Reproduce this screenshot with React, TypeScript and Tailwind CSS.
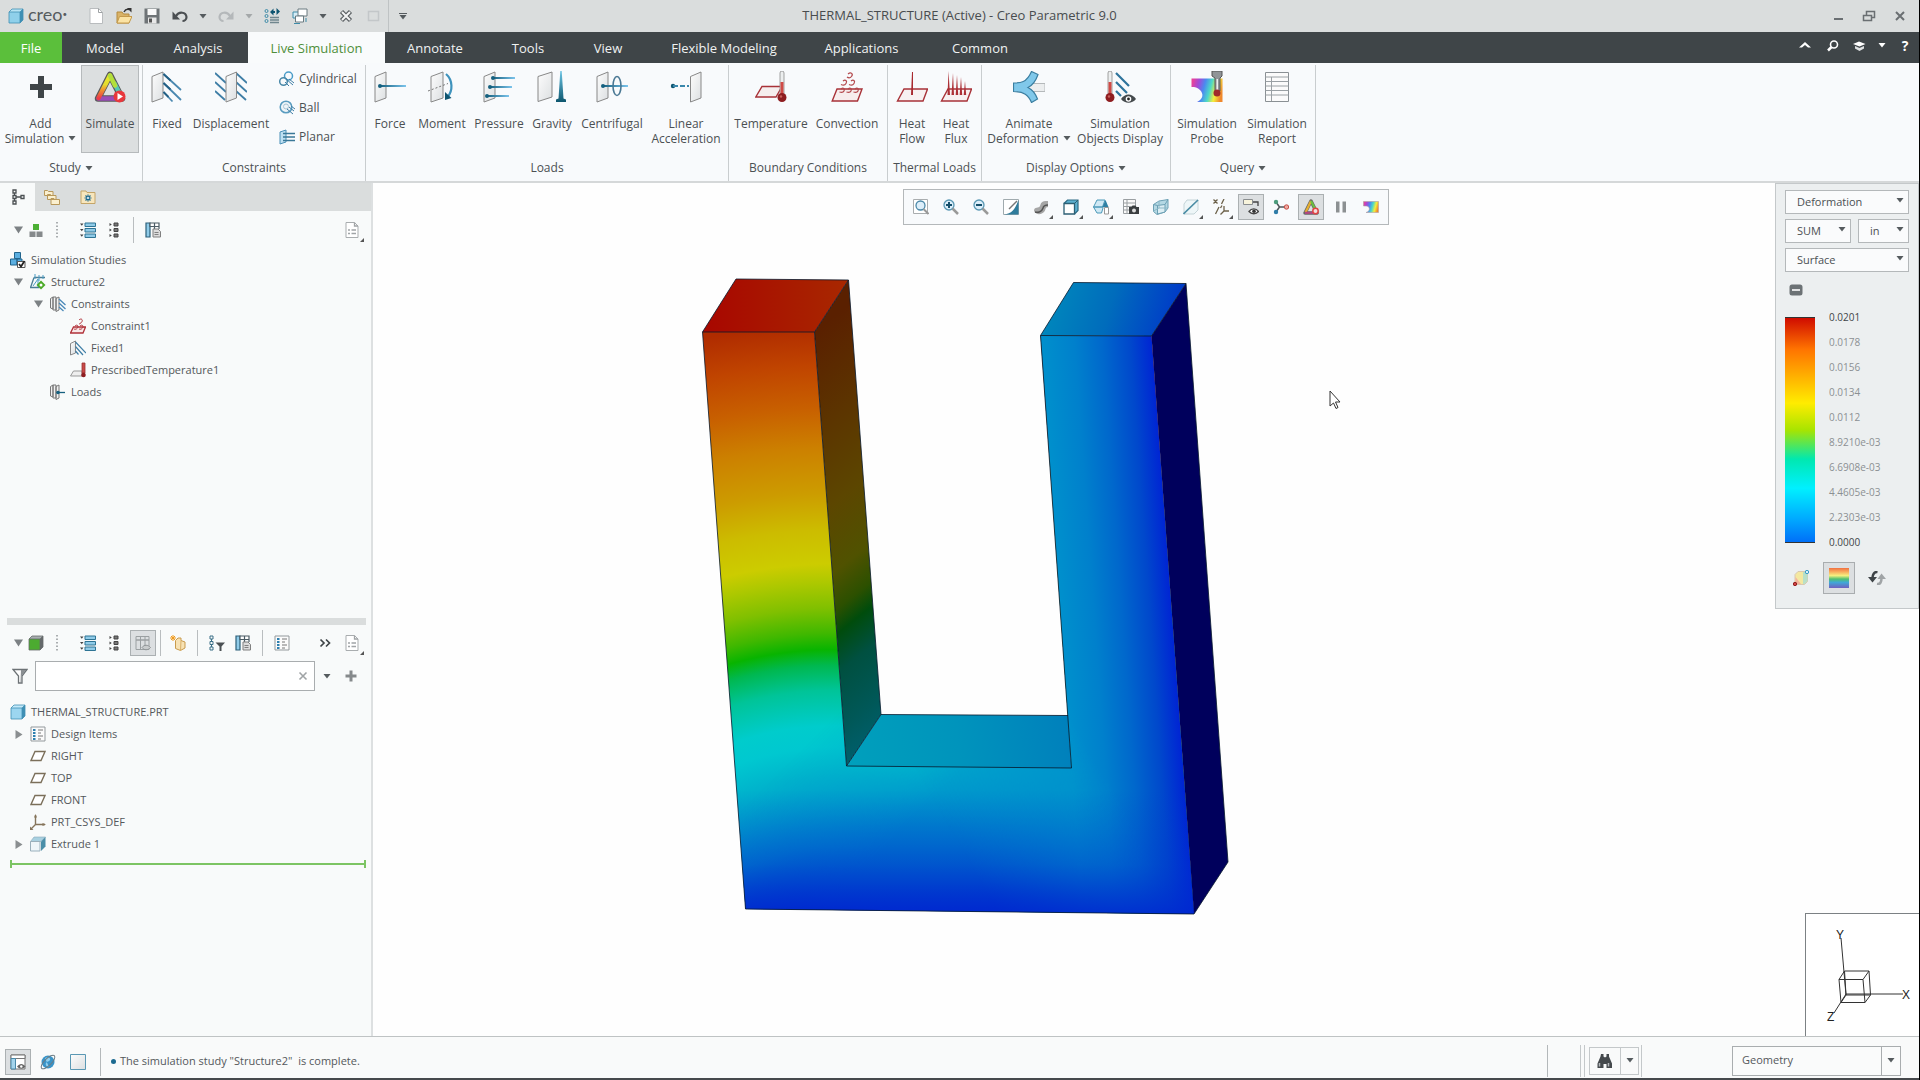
import { useState } from "react";
import type { ReactNode } from "react";

type GlyphProps = {
  children: ReactNode;
  size?: 16 | 32;
};

/* every icon is drawn on a 16 or 32 unit grid, one unit per pixel */
function Glyph({ children, size = 16 }: GlyphProps) {
  return (
    <svg
      viewBox={`0 0 ${size} ${size}`}
      className={size === 32 ? "h-8 w-8 shrink-0" : "h-4 w-4 shrink-0"}
      fill="none"
      aria-hidden="true"
    >
      {children}
    </svg>
  );
}

function Caret({ light = false }: { light?: boolean }) {
  return (
    <svg viewBox="0 0 8 5" className="h-[5px] w-2 shrink-0" aria-hidden="true">
      <path d="M0.5 0h7L4 4.5z" fill={light ? "#ffffff" : "#555b5e"} />
    </svg>
  );
}

function Corner() {
  return (
    <svg viewBox="0 0 4 4" className="absolute right-0 bottom-0 h-1 w-1" aria-hidden="true">
      <path d="M4 0v4H0z" fill="#555" />
    </svg>
  );
}

/* shared gradients, referenced by id from all the icons */
function Gradients() {
  return (
    <svg className="absolute h-0 w-0" aria-hidden="true">
      <defs>
        <linearGradient id="bluefade">
          <stop offset="0" stopColor="#15607f" />
          <stop offset="1" stopColor="#7cc4ec" />
        </linearGradient>
        <linearGradient id="blueV" x1="0" y1="0" x2="0" y2="1">
          <stop offset="0" stopColor="#6cc4e4" />
          <stop offset="1" stopColor="#0d566e" />
        </linearGradient>
        <linearGradient id="plate" x1="0" y1="0" x2="1" y2="1">
          <stop offset="0" stopColor="#fdfdfd" />
          <stop offset="1" stopColor="#dcdfe1" />
        </linearGradient>
        <linearGradient id="rainbow" x1="0" y1="0.3" x2="1" y2="0.5">
          <stop offset="0" stopColor="#e8409a" />
          <stop offset="0.2" stopColor="#a04ad8" />
          <stop offset="0.4" stopColor="#4a8af0" />
          <stop offset="0.6" stopColor="#4cd8c8" />
          <stop offset="0.8" stopColor="#f4ee3c" />
          <stop offset="1" stopColor="#f0882c" />
        </linearGradient>
        <linearGradient id="spectrum" x1="0" y1="0" x2="0" y2="1">
          <stop offset="0" stopColor="#e8e82c" />
          <stop offset="0.4" stopColor="#e4dc30" />
          <stop offset="0.65" stopColor="#f09030" />
          <stop offset="1" stopColor="#ec3c48" />
        </linearGradient>
      </defs>
    </svg>
  );
}

const PLATE = "M1 5.5 12 1v26L1 31z";

function BallBar({ x, y, len }: { x: number; y: number; len: number }) {
  return (
    <>
      <rect x={x} y={y - 1} width={len} height="2" fill="url(#bluefade)" />
      <circle cx={x} cy={y} r="2" fill="#15607f" />
    </>
  );
}

const plus = (
  <Glyph size={32}>
    <path d="M13 5h6v8h8v6h-8v8h-6v-8H5v-6h8z" fill="#3f4548" />
  </Glyph>
);

const simulate = (
  <Glyph size={32}>
    <path d="M16 4 28 27.5H4z" stroke="#5a5a5a" strokeWidth="6.5" strokeLinejoin="round" />
    <path d="M4.5 27.500h23" stroke="#9a4cb8" strokeWidth="4.500" strokeLinecap="round" />
    <path d="M16 4.500 4.500 27" stroke="url(#spectrum)" strokeWidth="4.500" strokeLinecap="round" />
    <path d="M20.500 12.500 27.500 26" stroke="#56c8b4" strokeWidth="4.500" strokeLinecap="round" />
    <path d="M16 4.500l5 10" stroke="#b4e03a" strokeWidth="4.500" strokeLinecap="round" />
    <circle cx="25.500" cy="25.500" r="6" fill="#e8383c" />
    <path d="M23.500 22v7l5.500-3.500z" fill="#fff" />
  </Glyph>
);

const fixed = (
  <Glyph size={32}>
    <path d={PLATE} fill="url(#plate)" stroke="#888" />
    <path d="M12.500 3 30 19M12.500 12 30 29M12.500 21l9 9.500" stroke="#4a88b0" strokeWidth="1.800" />
    <path d="M12.500 3l7 6.500M12.500 12l7 6.500M12.500 21l5 5" stroke="#235f84" strokeWidth="1.800" />
  </Glyph>
);

const displacement = (
  <Glyph size={32}>
    <path d="M0 2l11 10M0 11l11 10M0 20l10 9" stroke="#3f7ea6" strokeWidth="1.800" />
    <path d="M21 2l11 10M21 11l11 10M21 20l10 9" stroke="#3f7ea6" strokeWidth="1.800" />
    <path d="M11 5.500 21.500 1v26L11 31z" fill="url(#plate)" stroke="#888" />
  </Glyph>
);

const force = (
  <Glyph size={32}>
    <path d={PLATE} fill="url(#plate)" stroke="#888" />
    <BallBar x={6} y={15} len={26} />
  </Glyph>
);

const moment = (
  <Glyph size={32}>
    <path d="M5 5.500 17 1v26L5 31z" fill="url(#plate)" stroke="#888" />
    <path d="M2 20 22 12.500" stroke="#777" strokeDasharray="2 2" />
    <path d="M20 3c7 6 7 17 1.500 23" stroke="#3f93bd" strokeWidth="2.200" />
    <path d="M19 21v8l6.500-2z" fill="#0f5571" />
  </Glyph>
);

const pressure = (
  <Glyph size={32}>
    <path d={PLATE} fill="url(#plate)" stroke="#888" />
    <BallBar x={10} y={7} len={22} />
    <BallBar x={7} y={16} len={22} />
    <BallBar x={4} y={25} len={22} />
  </Glyph>
);

const gravity = (
  <Glyph size={32}>
    <path d="M2 5.500 16 1v25L2 30.500z" fill="url(#plate)" stroke="#888" />
    <path d="M24.300 0h1.400l1.800 27.500 2.500 1V31H20v-2.500l2.500-1z" fill="url(#blueV)" />
  </Glyph>
);

const centrifugal = (
  <Glyph size={32}>
    <path d={PLATE} fill="url(#plate)" stroke="#888" />
    <BallBar x={7} y={15} len={25} />
    <ellipse cx="21" cy="15" rx="4" ry="9.500" stroke="#4a7894" strokeWidth="1.600" />
  </Glyph>
);

const linear = (
  <Glyph size={32}>
    <path d="M20.500 5.500 31 1v26l-10.500 4z" fill="url(#plate)" stroke="#888" />
    <circle cx="3" cy="15" r="2.200" fill="#0f5571" />
    <path d="M3 15h16" stroke="#3a88ac" strokeWidth="1.800" strokeDasharray="5 2" />
  </Glyph>
);

function Thermometer() {
  return (
    <>
      <path d="M25 2a2 2 0 0 1 4 0v22h-4z" fill="#eceeef" stroke="#8a8a8a" strokeWidth="0.800" />
      <path d="M25.500 11h3v12h-3z" fill="#d04a46" />
      <circle cx="27" cy="26.500" r="4.500" fill="#8e1d20" />
      <circle cx="26" cy="25.500" r="1.200" fill="#c8605c" />
    </>
  );
}

const temperature = (
  <Glyph size={32}>
    <path d="M7 15.500h20l-6 10.500H0.800z" fill="#f5eeee" stroke="#a83238" strokeWidth="1.400" />
    <Thermometer />
  </Glyph>
);

const convection = (
  <Glyph size={32}>
    <path d="M6 18h25l-4.500 12H1.200z" fill="#f7eded" stroke="#a83238" strokeWidth="1.400" />
    <path
      d="M17 3c3-2.500 5.500 0 3.500 2.500S16 6 16 6M12 10c2.500-2 4.500 0 3 2.500s-5 1-5 1M20 10c2.500-2 4.500 0 3 2.500s-5 1-5 1M10 18c2.500-2 4 0 3 2s-4.500 1-4.500 1M17 18c2.500-2 4 0 3 2s-4.500 1-4.500 1M24 18c2.500-2 4 0 3 2s-4.500 1-4.500 1"
      stroke="#b3484c"
      strokeWidth="1.200"
    />
  </Glyph>
);

const heatFlow = (
  <Glyph size={32}>
    <path d="M8 18h23.500L27 30H1.500z" fill="#f7f1f1" stroke="#a83238" strokeWidth="1.400" />
    <path d="M16 1h1v23h-2z" fill="#a82a30" />
  </Glyph>
);

const heatFlux = (
  <Glyph size={32}>
    <path d="M8 18h23.500L27 30H1.500z" fill="#f7f1f1" stroke="#a83238" strokeWidth="1.400" />
    <path
      d="M8.500 0 10 24H7.500zM13 2l1 22h-2.500zM17 4l1.200 20h-2.500zM21 6l1.200 18h-2.500zM25 10l1.200 14h-2.500z"
      fill="#ac3036"
    />
  </Glyph>
);

const animate = (
  <Glyph size={32}>
    <path d="M12 12.500h20v8H12z" fill="#eceeef" stroke="#b5b9bb" />
    <path
      d="M0.500 12c7 0 13 0 18-11.500l6.500 3c-2 6-5 10.500-10 13 5 2.500 7.500 6 9.500 11.500l-6 3.500C15.500 24 11 20.500 0.500 20.500z"
      fill="#80c8ea"
      stroke="#3a7ea0"
      strokeWidth="1.200"
    />
  </Glyph>
);

const objectsDisplay = (
  <Glyph size={32}>
    <g transform="translate(-21 0)">
      <Thermometer />
    </g>
    <path d="M12 2l13 13M12 11l11 11M12 20l5 5" stroke="#2f749c" strokeWidth="2.200" />
    <path d="M17 28c4-6 11-6 15 0-4 5-11 5-15 0z" fill="#454a4d" />
    <circle cx="24.500" cy="28" r="2.800" fill="#fff" />
    <circle cx="24.500" cy="28" r="1.400" fill="#222" />
  </Glyph>
);

const probe = (
  <Glyph size={32}>
    <path d="M0.500 7.500h31V31H6c6-3 7-8 3-12-2.500-2.500-5-3-8.500-3z" fill="url(#rainbow)" />
    <path d="M21 0h10v5l-2 2v13h-5V7l-3-2z" fill="#909497" stroke="#555" />
    <path d="M25.500 8h1.500v12h-1.500z" fill="#eee" />
    <circle cx="26" cy="22" r="3.500" fill="#a02a2c" />
  </Glyph>
);

const report = (
  <Glyph size={32}>
    <path d="M4.500 1.500h23v29h-23z" fill="#fbfbfb" stroke="#8a9094" />
    <path d="M4.500 6h23M4.500 10.500h23M4.500 15h23M4.500 19.500h23M4.500 24h23M10.500 6v24" stroke="#9aa0a4" />
  </Glyph>
);

const cylindrical = (
  <Glyph>
    <circle cx="9.500" cy="5" r="4" stroke="#4a9cc8" strokeWidth="1.500" />
    <circle cx="4.500" cy="10.500" r="3.800" stroke="#4a88a8" strokeWidth="1.500" />
    <path d="M7 8l7 6M10 8l5 4M6 11l4 4" stroke="#3f7ea6" />
  </Glyph>
);

const ball = (
  <Glyph>
    <circle cx="7" cy="7" r="5.800" fill="#eef4f8" stroke="#5a9cc0" strokeWidth="1.500" />
    <circle cx="7" cy="6.500" r="2.500" stroke="#a8c4d4" />
    <path d="M10 7l5 4M8 9l6 5M12 6l4 3" stroke="#3f7ea6" />
  </Glyph>
);

const planar = (
  <Glyph>
    <path d="M1 3l6-2v12l-6 2z" fill="#bfe0f2" stroke="#4a90b8" />
    <path d="M4 4.500h12M4 8h12M4 11.500h12" stroke="#3a7898" strokeWidth="1.300" />
  </Glyph>
);

type Command = {
  label: string[];
  icon: ReactNode;
  width: string;
  menu?: boolean;
  active?: boolean;
};

type Group = {
  title: string;
  width: string;
  menu?: boolean;
  commands: Command[];
  list?: { label: string; icon: ReactNode }[];
};

const GROUPS: Group[] = [
  {
    title: "Study",
    width: "w-[143px]",
    menu: true,
    commands: [
      { label: ["Add", "Simulation"], icon: plus, width: "w-[81px]", menu: true },
      { label: ["Simulate"], icon: simulate, width: "w-[58px]", active: true },
    ],
  },
  {
    title: "Constraints",
    width: "w-[223px]",
    commands: [
      { label: ["Fixed"], icon: fixed, width: "w-12" },
      { label: ["Displacement"], icon: displacement, width: "w-20" },
    ],
    list: [
      { label: "Cylindrical", icon: cylindrical },
      { label: "Ball", icon: ball },
      { label: "Planar", icon: planar },
    ],
  },
  {
    title: "Loads",
    width: "w-[363px]",
    commands: [
      { label: ["Force"], icon: force, width: "w-12" },
      { label: ["Moment"], icon: moment, width: "w-14" },
      { label: ["Pressure"], icon: pressure, width: "w-[58px]" },
      { label: ["Gravity"], icon: gravity, width: "w-12" },
      { label: ["Centrifugal"], icon: centrifugal, width: "w-[72px]" },
      { label: ["Linear", "Acceleration"], icon: linear, width: "w-[76px]" },
    ],
  },
  {
    title: "Boundary Conditions",
    width: "w-[159px]",
    commands: [
      { label: ["Temperature"], icon: temperature, width: "w-[84px]" },
      { label: ["Convection"], icon: convection, width: "w-[68px]" },
    ],
  },
  {
    title: "Thermal Loads",
    width: "w-[94px]",
    commands: [
      { label: ["Heat", "Flow"], icon: heatFlow, width: "w-12" },
      { label: ["Heat", "Flux"], icon: heatFlux, width: "w-10" },
    ],
  },
  {
    title: "Display Options",
    width: "w-[189px]",
    menu: true,
    commands: [
      { label: ["Animate", "Deformation"], icon: animate, width: "w-[94px]", menu: true },
      { label: ["Simulation", "Objects Display"], icon: objectsDisplay, width: "w-[88px]" },
    ],
  },
  {
    title: "Query",
    width: "w-[145px]",
    menu: true,
    commands: [
      { label: ["Simulation", "Probe"], icon: probe, width: "w-[72px]" },
      { label: ["Simulation", "Report"], icon: report, width: "w-[68px]" },
    ],
  },
];

const TABS = [
  { label: "File", width: "w-[62px]" },
  { label: "Model", width: "w-[86px]" },
  { label: "Analysis", width: "w-[100px]" },
  { label: "Live Simulation", width: "w-[137px]" },
  { label: "Annotate", width: "w-[100px]" },
  { label: "Tools", width: "w-[86px]" },
  { label: "View", width: "w-[74px]" },
  { label: "Flexible Modeling", width: "w-[158px]" },
  { label: "Applications", width: "w-[117px]" },
  { label: "Common", width: "w-[120px]" },
];

function cube(front: string, top: string, side: string) {
  return (
    <Glyph>
      <path d="M1 4l3-3h11l-3 3z" fill={top} />
      <path d="M12 4l3-3v11l-3 3z" fill={side} />
      <path d="M1 4h11v11H1z" fill={front} />
      <path d="M1 4l3-3h11v11l-3 3H1zM1 4h11v11M12 4l3-3" stroke={side} strokeWidth="0.800" />
    </Glyph>
  );
}

const QUICK = [
  {
    label: "New",
    icon: (
      <Glyph>
        <path d="M2 0.500h8.500l4 4v11H2z" fill="#fff" stroke="#b9bcbe" />
        <path d="M10.500 0.500v4h4" stroke="#9ea2a4" />
      </Glyph>
    ),
  },
  {
    label: "Open",
    icon: (
      <Glyph>
        <path d="M1 4h5l1.500 2H13v9H1z" fill="#d9b368" stroke="#b58a3c" />
        <path d="M3.500 8.500H16L13 15H1z" fill="#fbe3a4" stroke="#c49a4c" />
        <path d="M8 4c1-2 3-3 5-2.500" stroke="#333" strokeWidth="1.500" />
        <path d="M11 0h4.500v4.500z" fill="#333" />
      </Glyph>
    ),
  },
  {
    label: "Save",
    icon: (
      <Glyph>
        <path d="M0.500 0.500h15v15h-15z" fill="#6f7477" />
        <path d="M3.500 1h9v6h-9z" fill="#fafafa" />
        <path d="M4 9.500h8.500v6H4z" fill="#e8e8e8" />
        <path d="M5 10.500h3v4H5z" fill="#555" />
      </Glyph>
    ),
  },
  {
    label: "Undo",
    icon: (
      <Glyph>
        <path d="M4 8c3-5 10-4 10.500 1 0 2.500-2 4-4 4" stroke="#4b4f52" strokeWidth="2.200" />
        <path d="M0.500 3.500v8h7.500z" fill="#4b4f52" />
      </Glyph>
    ),
    menu: true,
  },
  {
    label: "Redo",
    icon: (
      <Glyph>
        <path d="M12 8C9 3 2 4 1.500 9c0 2.500 2 4 4 4" stroke="#b4b8ba" strokeWidth="2.200" />
        <path d="M15.500 3.500v8H8z" fill="#b4b8ba" />
      </Glyph>
    ),
    menu: true,
    faded: true,
  },
  {
    label: "Regenerate",
    icon: (
      <Glyph>
        <circle cx="2.500" cy="3" r="1.500" stroke="#3d8ba8" />
        <circle cx="2.500" cy="8" r="1.500" stroke="#3d8ba8" />
        <circle cx="2.500" cy="13" r="1.500" stroke="#3d8ba8" />
        <path d="M6 9.500h9M6 12h9M6 14.500h9" stroke="#70868e" strokeWidth="1.300" />
        <path d="M6 4l3.500-3.500V3H11v2H9.500v2.500zM16 3.500 12.500 7V0z" fill="#0e5571" />
      </Glyph>
    ),
  },
  {
    label: "Windows",
    icon: (
      <Glyph>
        <path d="M1 4h8v6H1z" fill="#d6edf7" stroke="#3d8ba8" />
        <path d="M6 1h9v7H6z" fill="#fff" stroke="#6a7a80" />
        <path d="M3.500 8h8v6h-8z" fill="#fff" stroke="#6a7a80" />
        <path d="M2 15.500h6M14 10v4" stroke="#3d8ba8" />
      </Glyph>
    ),
    menu: true,
  },
  {
    label: "Close",
    icon: (
      <Glyph>
        <path d="M3.500 3.500l9 9M12.500 3.500l-9 9" stroke="#5a5f62" strokeWidth="4.500" />
        <path d="M4 4l8 8M12 4l-8 8" stroke="#f4f5f5" strokeWidth="2" />
      </Glyph>
    ),
  },
  {
    label: "Blank",
    icon: (
      <Glyph>
        <path d="M2.500 3.500h10v9h-10z" stroke="#c3c7c9" strokeWidth="1.500" />
      </Glyph>
    ),
  },
];

function TitleBar() {
  return (
    <header className="grid h-8 shrink-0 grid-cols-[1fr_auto_1fr] items-center bg-[#dadddd]">
      <div className="flex h-full items-center">
        <div className="flex w-[82px] items-center gap-1 pl-2">
          {cube("#8fd0ea", "#b8e4f4", "#3f8fb4")}
          <div className="flex items-center pb-1 font-['Lato'] text-lg leading-5 text-[#565b5e]">
            creo<span className="text-[8px] leading-none">•</span>
          </div>
        </div>
        {QUICK.map((item) => (
          <div key={item.label} className="flex items-center">
            <button type="button" aria-label={item.label} className="flex w-7 justify-center">
              {item.icon}
            </button>
            {item.menu && (
              <button
                type="button"
                aria-label={`${item.label} list`}
                className={`flex w-[18px] justify-center ${item.faded ? "opacity-40" : ""}`}
              >
                <Caret />
              </button>
            )}
          </div>
        ))}
        <div className="h-full border-l border-[#bfc3c4]" />
        <button type="button" aria-label="Customize toolbar" className="flex w-7 flex-col items-center gap-px">
          <span className="h-px w-2 bg-[#555b5e]" />
          <Caret />
        </button>
      </div>
      <h1 className="text-[13px] text-[#484c4f]">THERMAL_STRUCTURE (Active) - Creo Parametric 9.0</h1>
      <div className="flex justify-end pr-1">
        <button type="button" aria-label="Minimize" className="flex w-[31px] justify-center">
          <Glyph>
            <path d="M4 10h9v2H4z" fill="#6a6f72" />
          </Glyph>
        </button>
        <button type="button" aria-label="Restore" className="flex w-[31px] justify-center">
          <Glyph>
            <path d="M5.500 7V3.500h8v6h-3M2.500 7.500h8v5h-8z" stroke="#6a6f72" strokeWidth="1.500" />
          </Glyph>
        </button>
        <button type="button" aria-label="Close window" className="flex w-[31px] justify-center">
          <Glyph>
            <path d="M4 4l8 8M12 4l-8 8" stroke="#6a6f72" strokeWidth="2" />
          </Glyph>
        </button>
      </div>
    </header>
  );
}

function tabStyle(label: string, selected: boolean) {
  if (label === "File") return "bg-[#5bbf3b] text-white";
  return selected ? "bg-[#f9fbfc] text-[#4f8f3a]" : "text-[#f0f2f2]";
}

function TabBar() {
  const [current, setCurrent] = useState("Live Simulation");

  return (
    <nav className="flex h-[31px] shrink-0 bg-[#3f4548]">
      {TABS.map((tab) => (
        <button
          key={tab.label}
          type="button"
          onClick={() => setCurrent(tab.label)}
          className={`${tab.width} pt-[2px] text-center text-[13px] ${tabStyle(tab.label, current === tab.label)}`}
        >
          {tab.label}
        </button>
      ))}
      <div className="ml-auto flex items-center pr-[2px] pb-1">
        <button type="button" aria-label="Collapse ribbon" className="flex w-7 justify-center">
          <Glyph>
            <path d="M2 9.500 8 4l6 5.500-3 0L8 7 5 9.500z" fill="#fff" />
          </Glyph>
        </button>
        <button type="button" aria-label="Search commands" className="flex w-7 justify-center">
          <Glyph>
            <circle cx="9" cy="6.500" r="3.500" stroke="#fff" strokeWidth="1.600" />
            <path d="M6.500 9 3 12.500" stroke="#fff" strokeWidth="2.500" />
          </Glyph>
        </button>
        <button type="button" aria-label="Learning" className="flex w-6 justify-center">
          <Glyph>
            <path d="M2 6l6-2.500L14.500 6 8.500 8.500z" fill="#fff" />
            <path d="M4 8l4.500 2L13 8v2.500L8.500 13 4 10.500z" fill="#dfe2e3" />
          </Glyph>
        </button>
        <button type="button" aria-label="Learning list" className="flex w-[22px] justify-center">
          <Caret light />
        </button>
        <button type="button" aria-label="Help" className="w-6 text-center text-sm font-bold text-white">
          ?
        </button>
      </div>
    </nav>
  );
}

function CommandButton({ label, icon, width, menu, active }: Command) {
  return (
    <button
      type="button"
      className={`flex h-[88px] shrink-0 flex-col items-center border pt-[5px] ${width} ${
        active ? "border-[#b6babc] bg-[#dcdfe0]" : "border-transparent"
      }`}
    >
      {icon}
      <span className="mt-[13px] flex flex-col items-center text-xs leading-[15px] whitespace-nowrap">
        {label.map((line, i) => (
          <span key={line} className="flex items-center gap-1">
            {line}
            {menu && i === label.length - 1 && <Caret />}
          </span>
        ))}
      </span>
    </button>
  );
}

function Ribbon() {
  return (
    <section className="flex h-[120px] shrink-0 border-b-2 border-[#d5d8d9] bg-[#f8fafc] pt-[2px] text-[#4b5053]">
      {GROUPS.map((group) => (
        <div key={group.title} className={`flex shrink-0 flex-col border-r border-[#c9cdcf] ${group.width}`}>
          <div className="flex">
            {group.commands.map((command) => (
              <CommandButton key={command.label.join(" ")} {...command} />
            ))}
            {group.list && (
              <div className="flex flex-col pl-2">
                {group.list.map((item) => (
                  <button
                    key={item.label}
                    type="button"
                    className="flex h-[29px] items-center gap-1 pb-[2px] text-xs"
                  >
                    {item.icon}
                    {item.label}
                  </button>
                ))}
              </div>
            )}
          </div>
          <div className="flex flex-1 items-center justify-center gap-1 pt-[2px] text-xs whitespace-nowrap">
            {group.title}
            {group.menu && <Caret />}
          </div>
        </div>
      ))}
    </section>
  );
}

const listIcon = (
  <Glyph>
    <path d="M5 1h10.500v3.500H5zM5 6.500h10.500V10H5zM5 12h10.500v3.500H5z" fill="#8fcbe8" stroke="#2e7494" />
    <path d="M0 1.500h3.500L1.800 3.800zM0 7h3.500L1.800 9.300zM0 12.500h3.500l-1.700 2.300z" fill="#444" />
  </Glyph>
);

const collapseIcon = (
  <Glyph>
    <path d="M8 1h4v3H8zM8 6.500h4v3H8zM8 12h4v3H8z" fill="#777" stroke="#444" />
    <path d="M3.500 1v3l2.300-1.500zM3.500 6.500v3L5.800 8zM3.500 12v3l2.300-1.500z" fill="#444" />
  </Glyph>
);

const columnsIcon = (
  <Glyph>
    <path d="M1 1h4v14H1z" fill="#8fcbe8" stroke="#2c5f78" strokeWidth="1.200" />
    <path d="M5 1h9v3.500H5zM9.500 1v6M14 4v3" fill="#fff" stroke="#4c5c64" strokeWidth="1.200" />
    <path d="M8 7h5l2.500 2.500V15H8z" fill="#dcdcdc" stroke="#808080" />
    <path d="M9.500 10.500h4M9.500 12.500h4" stroke="#808080" />
  </Glyph>
);

const docIcon = (
  <Glyph>
    <path d="M2 0.500h8.500l3.500 3.500v11.500H2z" fill="#fff" stroke="#a9adaf" />
    <path d="M4 8h2M7.500 8H12M4 11.500h2M7.500 11.500H12M10.500 0.500V4H14" stroke="#a0a4a6" strokeWidth="1.300" />
  </Glyph>
);

const dots = (
  <Glyph>
    <path d="M8 0v16" stroke="#909598" strokeWidth="1.500" strokeDasharray="1.500 2" />
  </Glyph>
);

function DownTriangle() {
  return (
    <svg viewBox="0 0 9 8" className="h-2 w-[9px] shrink-0" aria-hidden="true">
      <path d="M0 0.500h9L4.500 7.500z" fill="#7c8184" />
    </svg>
  );
}

function RightTriangle() {
  return (
    <svg viewBox="0 0 8 9" className="h-[9px] w-2 shrink-0" aria-hidden="true">
      <path d="M0.500 0v9l7-4.500z" fill="#8a8e90" />
    </svg>
  );
}

const designItems = (
  <Glyph>
    <path d="M1 1h14v14H1z" fill="#fbfbfb" stroke="#93999c" />
    <path d="M3 4h2.500M3 7h2.500M3 10h2.500M3 13h2.500" stroke="#2e80b0" strokeWidth="2" />
    <path d="M8 4h5M8 7h3M8 10h5M8 13h3" stroke="#777" />
  </Glyph>
);

const datumPlane = (
  <Glyph>
    <path d="M5 3.500h10L11 12.500H1z" fill="#fff" stroke="#7b6f5a" strokeWidth="1.400" />
  </Glyph>
);

type TreeRow = {
  label: string;
  icon: ReactNode;
  indent: string;
  open?: boolean;
};

const STUDY_ROWS: TreeRow[] = [
  {
    label: "Simulation Studies",
    indent: "pl-[10px]",
    icon: (
      <Glyph>
        <path d="M4.500 0.500h6v6h-6zM0.500 7h6.500v6H0.500zM7 7h5v6H7z" fill="#5aaee0" stroke="#22648c" />
        <path d="M7.500 9.500H15v6H7.500z" fill="#fff" stroke="#555" />
        <path d="M9 12l2 2.500L14.500 9" stroke="#222" strokeWidth="1.800" />
      </Glyph>
    ),
  },
  {
    label: "Structure2",
    indent: "pl-[14px]",
    open: true,
    icon: (
      <Glyph>
        <path d="M4 3.500h11M4 3.500 0.500 13.500h9" stroke="#4b7c94" strokeWidth="1.300" />
        <path d="M3 12 8 5v8M5 0v5M9 1v6M13 1v4" stroke="#4b9cc4" />
        <path d="M11 6.500l4.500 4.500-4.500 4.500L6.500 11z" fill="#4caa28" />
        <circle cx="11" cy="11" r="1.500" fill="#fff" />
      </Glyph>
    ),
  },
  {
    label: "Constraints",
    indent: "pl-[34px]",
    open: true,
    icon: (
      <Glyph>
        <path d="M0.500 2.500 3 1v12l-2.500-1zM3 1h3v13H3zM6 2.500 9 1v13l-3 1.500z" fill="#f2f2f2" stroke="#777" />
        <path d="M9 3l6.500 6M9 7l6.500 6M9 11l4.500 4" stroke="#4a88b8" strokeWidth="1.300" />
      </Glyph>
    ),
  },
  {
    label: "Constraint1",
    indent: "pl-[70px]",
    icon: (
      <Glyph>
        <path d="M3.500 9h12L13 15H0.500z" fill="#f8e8e8" stroke="#b03038" strokeWidth="1.300" />
        <path d="M9 2c2-2 4-.500 3 1.500S9 6 9 6M5 8c2-2 4 0 2.500 2S4 11 4 11M10 8c2-2 4 0 2.500 2S9 11 9 11" stroke="#b03038" />
      </Glyph>
    ),
  },
  {
    label: "Fixed1",
    indent: "pl-[70px]",
    icon: (
      <Glyph>
        <path d="M0.500 3.500 5.500 1v12l-5 2z" fill="url(#plate)" stroke="#888" />
        <path d="M5.500 2 16 13M5.500 6.500 13 15M5.500 11l3 3.500" stroke="#3f7ea6" strokeWidth="1.200" />
      </Glyph>
    ),
  },
  {
    label: "PrescribedTemperature1",
    indent: "pl-[70px]",
    icon: (
      <Glyph>
        <path d="M3.500 9H12v5H0.500z" fill="#eee" stroke="#999" />
        <path d="M12 1h3v10h-3z" fill="#c84a48" stroke="#993030" strokeWidth="0.800" />
        <circle cx="13.500" cy="13" r="2.300" fill="#8e1d20" />
      </Glyph>
    ),
  },
  {
    label: "Loads",
    indent: "pl-[50px]",
    icon: (
      <Glyph>
        <path d="M0.500 2.500 3 1v12l-2.500-1zM3 1h3v13H3zM6 2.500 9 1v13l-3 1.500z" fill="#f2f2f2" stroke="#777" />
        <path d="M7 8.500h8" stroke="#15607f" strokeWidth="1.300" />
        <circle cx="8" cy="8.500" r="1.800" fill="#15607f" />
      </Glyph>
    ),
  },
];

const MODEL_ROWS: TreeRow[] = [
  {
    label: "THERMAL_STRUCTURE.PRT",
    indent: "pl-[10px]",
    icon: cube("#9cd6f0", "#c4eafa", "#3f8fb4"),
  },
  { label: "Design Items", indent: "pl-[15px]", open: false, icon: designItems },
  { label: "RIGHT", indent: "pl-[30px]", icon: datumPlane },
  { label: "TOP", indent: "pl-[30px]", icon: datumPlane },
  { label: "FRONT", indent: "pl-[30px]", icon: datumPlane },
  {
    label: "PRT_CSYS_DEF",
    indent: "pl-[30px]",
    icon: (
      <Glyph>
        <path d="M5.500 1v9.500H15M5.500 10.500 1 15" stroke="#85745a" strokeWidth="1.400" />
        <path d="M4 3.500 5.500 0 7 3.500zM12.500 9l3.500 1.500-3.500 1.500zM0 12.500v3.500h3.500z" fill="#85745a" />
      </Glyph>
    ),
  },
  {
    label: "Extrude 1",
    indent: "pl-[15px]",
    open: false,
    icon: (
      <Glyph>
        <path d="M4 1h11.500L11 5.500H0.500z" fill="#a8d0e0" stroke="#88a8b8" strokeWidth="0.600" />
        <path d="M15.500 1v9.500L11 15V5.500z" fill="#4a8ea8" />
        <path d="M0.500 5.500H10v9.500H0.500z" fill="#eef6fa" stroke="#9ab0bc" />
      </Glyph>
    ),
  },
];

function Tree({ rows, label }: { rows: TreeRow[]; label: string }) {
  return (
    <ul aria-label={label} className="text-[11px] text-[#54585b]">
      {rows.map((row) => (
        <li key={row.label} className={`flex h-[22px] items-center ${row.indent}`}>
          {row.open !== undefined && (
            <button
              type="button"
              aria-label={`Toggle ${row.label}`}
              aria-expanded={row.open}
              className="mr-[7px]"
            >
              {row.open ? <DownTriangle /> : <RightTriangle />}
            </button>
          )}
          {row.icon}
          <span className="ml-[5px]">{row.label}</span>
        </li>
      ))}
    </ul>
  );
}

function ToolButton({
  label,
  children,
  active,
}: {
  label: string;
  children: ReactNode;
  active?: boolean;
}) {
  return (
    <button
      type="button"
      aria-label={label}
      className={`relative flex h-[26px] w-[26px] shrink-0 items-center justify-center border ${
        active ? "border-[#abb0b2] bg-[#dcdfe1]" : "border-transparent"
      }`}
    >
      {children}
    </button>
  );
}

function Separator({ wide = false }: { wide?: boolean }) {
  return <div className={`h-[26px] border-l border-[#b9bdbf] ${wide ? "mx-[6px]" : "mx-1"}`} />;
}

function Sidebar() {
  return (
    <aside className="flex w-[373px] shrink-0 flex-col border-r-2 border-[#dde0e1] bg-[#f8fafa]">
      <div className="flex h-7 shrink-0 bg-[#dadddd]">
        <button type="button" aria-label="Model tree" className="flex w-[35px] items-center justify-center bg-[#f8fafa]">
          <Glyph>
            <path d="M3 1h3v3H3zM3 6.500h3v3H3zM3 12h3v3H3zM11 6.500h3v3h-3zM4.500 4v2.500M4.500 9.500V12M6 8h5" stroke="#4b5053" strokeWidth="1.300" />
          </Glyph>
        </button>
        <button type="button" aria-label="Folder browser" className="flex w-[34px] items-center justify-center">
          <Glyph>
            <path d="M0.500 1.500h3l1 1H9v4H0.500zM3.500 5.500h3l1 1H12v4H3.500zM7 9.500h3l1 1h4.500v5H7z" fill="#fbf0cf" stroke="#b8985a" />
          </Glyph>
        </button>
        <button type="button" aria-label="Favorites" className="flex w-[38px] items-center justify-center">
          <Glyph>
            <path d="M1 2h5l1 1.500h8v11H1z" fill="#f7e6bd" stroke="#c4a568" />
            <path d="M8 5.500v7M4.500 9h7M5.500 6.500l5 5M10.500 6.500l-5 5" stroke="#1c6a90" strokeWidth="1.200" />
            <circle cx="8" cy="9" r="1" fill="#fff" />
          </Glyph>
        </button>
      </div>

      <div className="flex min-h-0 flex-[407] flex-col">
        <div className="flex h-[38px] shrink-0 items-center pl-[14px]">
          <DownTriangle />
          <ToolButton label="Studies">
            <Glyph>
              <path d="M5 2h6v6H5z" fill="#4caf34" />
              <path d="M1.500 9.500h6V15h-6zM8.500 9.500h6V15h-6z" fill="#85898b" />
            </Glyph>
          </ToolButton>
          {dots}
          <div className="w-[10px]" />
          <ToolButton label="Expand all">{listIcon}</ToolButton>
          <ToolButton label="Collapse all">{collapseIcon}</ToolButton>
          <Separator wide />
          <ToolButton label="Tree columns">{columnsIcon}</ToolButton>
          <div className="mr-[6px] ml-auto">
            <ToolButton label="Study settings">
              {docIcon}
              <Corner />
            </ToolButton>
          </div>
        </div>
        <Tree rows={STUDY_ROWS} label="Simulation studies" />
      </div>

      <div className="mr-[5px] ml-[7px] h-[7px] shrink-0 bg-[#dadddd]" />

      <div className="flex min-h-0 flex-[411] flex-col">
        <div className="flex h-9 shrink-0 items-center pl-[14px]">
          <DownTriangle />
          <ToolButton label="Model">{cube("#4cab30", "#a8aeb0", "#64696b")}</ToolButton>
          {dots}
          <div className="w-[10px]" />
          <ToolButton label="Expand model">{listIcon}</ToolButton>
          <ToolButton label="Collapse model">{collapseIcon}</ToolButton>
          <div className="w-[3px]" />
          <ToolButton label="Show columns" active>
            <Glyph>
              <path d="M1 1.500h13V5H1zM1 5h13v9.500H1zM5.500 1.500v13M10 1.500v13" stroke="#9ba0a2" />
              <path d="M7 12.500c2-3 6-3 8.500 0-2.500 3-6.500 3-8.500 0z" fill="#c9cccd" stroke="#8e9395" />
            </Glyph>
          </ToolButton>
          <Separator />
          <ToolButton label="New group">
            <Glyph>
              <path d="M5.500 5.500 8 3h3v2.500l4 1.500v6l-4.500 2.500-5-2z" fill="#f7e2b4" stroke="#c89a4c" />
              <path d="M11 5.500 10.500 15.500" stroke="#d8b068" />
              <path d="M3 0v6M0 3h6M1 1l4 4M5 1 1 5" stroke="#f09a1c" />
            </Glyph>
          </ToolButton>
          <Separator wide />
          <ToolButton label="Tree filters">
            <Glyph>
              <path d="M1 1h3v3H1zM1 6.500h3v3H1zM1 12h3v3H1zM2.500 4v2.500M2.500 9.500V12" stroke="#3a6f86" />
              <path d="M6.500 7.500H16l-3.500 4V16h-2v-4.500z" fill="#4b5053" />
            </Glyph>
          </ToolButton>
          <ToolButton label="Model columns">{columnsIcon}</ToolButton>
          <Separator wide />
          <ToolButton label="Design items">{designItems}</ToolButton>
          <button type="button" aria-label="More tools" className="mr-[6px] ml-auto">
            <Glyph>
              <path d="M3.500 4.500 7 8l-3.500 3.500M9 4.500 12.500 8 9 11.500" stroke="#3f4548" strokeWidth="1.700" />
            </Glyph>
          </button>
          <div className="mr-[6px]">
            <ToolButton label="Model settings">
              {docIcon}
              <Corner />
            </ToolButton>
          </div>
        </div>

        <div className="flex h-[30px] shrink-0 items-center">
          <div className="flex w-[35px] justify-center pl-1">
            <Glyph>
              <path d="M1 1.500h14L10 8v7H6.500V8z" fill="#fdfdfd" stroke="#6c7275" strokeWidth="1.300" />
              <path d="M9 2h5L9.500 8v6.500H8.500z" fill="#8a8f92" />
            </Glyph>
          </div>
          <div className="relative h-full w-[280px]">
            <input
              type="text"
              aria-label="Filter tree"
              className="h-full w-full border border-[#a9adaf] bg-white px-2 pr-6 text-xs outline-none"
            />
            <button type="button" aria-label="Clear filter" className="absolute top-[7px] right-1">
              <Glyph>
                <path d="M4.500 4.500l7 7M11.500 4.500l-7 7" stroke="#a0a4a6" strokeWidth="1.600" />
              </Glyph>
            </button>
          </div>
          <button type="button" aria-label="Filter list" className="flex w-6 justify-center">
            <Caret />
          </button>
          <button type="button" aria-label="Add filter" className="flex w-6 justify-center">
            <Glyph>
              <path d="M6.500 2.500h3v4h4v3h-4v4h-3v-4h-4v-3h4z" fill="#85898b" />
            </Glyph>
          </button>
        </div>

        <div className="pt-[10px]">
          <Tree rows={MODEL_ROWS} label="Model tree" />
        </div>
        <div className="mr-[5px] ml-[10px] flex h-[18px] items-center">
          <div className="h-2 w-[2px] bg-[#7cc463]" />
          <div className="h-[2px] flex-1 bg-[#7cc463]" />
          <div className="h-2 w-[2px] bg-[#7cc463]" />
        </div>
      </div>
    </aside>
  );
}

const VIEW_TOOLS: { label: string; icon: ReactNode; active?: boolean; corner?: boolean }[] = [
  {
    label: "Refit",
    icon: (
      <Glyph>
        <path d="M0.500 0.500h14v14h-14z" fill="#fff" stroke="#a9adaf" />
        <circle cx="7.500" cy="6.500" r="4.500" fill="#dceefa" stroke="#4a88a8" strokeWidth="1.300" />
        <path d="M10.500 10l5 5" stroke="#999" strokeWidth="2" />
      </Glyph>
    ),
  },
  {
    label: "Zoom in",
    icon: (
      <Glyph>
        <circle cx="6" cy="6" r="5" fill="#dceefa" stroke="#5a98b4" strokeWidth="1.300" />
        <path d="M3 6h6M6 3v6" stroke="#15506c" strokeWidth="2" />
        <path d="M9.500 9.500l5.500 5.500" stroke="#999" strokeWidth="2.500" />
      </Glyph>
    ),
  },
  {
    label: "Zoom out",
    icon: (
      <Glyph>
        <circle cx="6" cy="6" r="5" fill="#dceefa" stroke="#5a98b4" strokeWidth="1.300" />
        <path d="M3 6h6" stroke="#15506c" strokeWidth="2" />
        <path d="M9.500 9.500l5.500 5.500" stroke="#999" strokeWidth="2.500" />
      </Glyph>
    ),
  },
  {
    label: "Repaint",
    icon: (
      <Glyph>
        <path d="M0.500 0.500h15v15h-15z" fill="#fff" stroke="#a0aaae" />
        <path d="M15.500 1v14.500H1C9 15 12 10 15.500 1z" fill="#2f7c9c" />
        <path d="M6 10 14 2" stroke="#777" strokeWidth="1.500" />
      </Glyph>
    ),
  },
  {
    label: "Rendering",
    corner: true,
    icon: (
      <Glyph>
        <path d="M1 12c0-5 5-2 6-5s1-5 8-5v6c-3 0-2 3-4 5s-7 4-10-1z" fill="#a6a6a6" />
        <path d="M2 13c4 1 7-1 8-4 .500-2 1-3 5-3" stroke="#555" strokeWidth="1.600" />
      </Glyph>
    ),
  },
  {
    label: "Display style",
    corner: true,
    icon: (
      <Glyph>
        <path d="M1 4.500 4.500 1H15v10.500L11.500 15" fill="#5cb0d0" stroke="#2c6a84" strokeWidth="1.200" />
        <path d="M1 4.500h10.500V15H1z" fill="#fff" stroke="#2c5f74" strokeWidth="1.300" />
        <path d="M11.500 4.500 15 1" stroke="#2c5f74" />
      </Glyph>
    ),
  },
  {
    label: "Saved orientations",
    corner: true,
    icon: (
      <Glyph>
        <path d="M0.500 8 4 1h8L9.500 8zM0.500 8h9.500v1l-1.500 5H4z" fill="#cfe8f4" stroke="#4a98b8" />
        <path d="M9.500 8 12.500 1l3 7z" fill="#2f80a4" />
        <path d="M11.500 8.500h4v6.500h-4z" fill="#fff" stroke="#999" />
      </Glyph>
    ),
  },
  {
    label: "View manager",
    icon: (
      <Glyph>
        <path d="M0.500 0.500h12v14H0.500zM0.500 4h12M0.500 7.500h12M0.500 11h12M4 0.500v14" fill="#fafafa" stroke="#9a9fa2" />
        <path d="M6 8h2.500l1-1.500h3L13.500 8H16v7H6z" fill="#3a3e40" />
        <circle cx="11" cy="11.500" r="2" fill="#ddd" />
      </Glyph>
    ),
  },
  {
    label: "Perspective",
    icon: (
      <Glyph>
        <path d="M0.500 5.500 6 2l9-1.500V9L12 13l-8 2.500-3.500-3z" fill="#b4d8e4" stroke="#6ca0b4" />
        <path d="M4.500 6.500 12 5.500V13l-7.500 2zM0.500 5.500l4 1M12 5.500l3-5" fill="#dceef4" stroke="#6ca0b4" />
        <path d="M6 2v7l-5.500 3M6 9l9 0" stroke="#8cb8c8" />
      </Glyph>
    ),
  },
  {
    label: "Section",
    corner: true,
    icon: (
      <Glyph>
        <path d="M1 5l3-4h11v10l-4 4H1z" fill="#eef6f8" stroke="#c4d4d8" />
        <path d="M0.500 15 15 1" stroke="#4a8ca4" strokeWidth="1.600" />
      </Glyph>
    ),
  },
  {
    label: "Datum display",
    corner: true,
    icon: (
      <Glyph>
        <path d="M0.500 0.500l4 4M4.500 0.500l-4 4M11 0 8.500 5M9 6.500 7.500 9M6 8 2.500 15M11 7v5h5M11 12l-3.500 3.500" stroke="#6c614a" strokeWidth="1.300" />
      </Glyph>
    ),
  },
  {
    label: "Annotation display",
    active: true,
    icon: (
      <Glyph>
        <path d="M0.500 0.500h9v5h-9z" fill="#f8f4dc" stroke="#8a8e90" />
        <path d="M10 3h5v4" stroke="#444" strokeWidth="1.300" />
        <path d="M6 12.500c2.500-3.500 7-3.500 9.500 0-2.500 3-7 3-9.500 0z" fill="#fff" stroke="#444" strokeWidth="1.300" />
        <circle cx="11" cy="12.300" r="1.800" fill="#333" />
      </Glyph>
    ),
  },
  {
    label: "Spin center",
    icon: (
      <Glyph>
        <path d="M3 3l3.500 5L3 13M6.500 8H13" stroke="#4d5558" strokeWidth="1.500" />
        <circle cx="3" cy="3" r="2.200" fill="#4c9c7c" />
        <circle cx="3" cy="13" r="2.200" fill="#2f7ca8" />
        <circle cx="13.500" cy="8" r="2.200" fill="#f0a8a0" stroke="#c45048" />
      </Glyph>
    ),
  },
  {
    label: "Simulation results",
    active: true,
    icon: (
      <Glyph>
        <path d="M8 2 14 14H2z" stroke="#666" strokeWidth="3.500" strokeLinejoin="round" />
        <path d="M8 2 2.500 13.500" stroke="#e8b030" strokeWidth="2.200" />
        <path d="M8 2l6 11.500" stroke="#6cc040" strokeWidth="2.200" />
        <path d="M2 13.800h11" stroke="#b04880" strokeWidth="2.200" />
        <circle cx="12.500" cy="12" r="2.700" fill="#f4dcdc" stroke="#e04444" strokeWidth="1.500" />
      </Glyph>
    ),
  },
  {
    label: "Pause",
    icon: (
      <Glyph>
        <path d="M3 2.500h3.500v11H3zM9.500 2.500H13v11H9.500z" fill="#8c9092" />
      </Glyph>
    ),
  },
  {
    label: "Probe display",
    icon: (
      <Glyph>
        <path d="M0.500 2.500h15v11H3c4-1 4-5 2-6-1-.500-2-.500-4.500-.500z" fill="url(#rainbow)" stroke="#b0a0a0" strokeWidth="0.600" />
      </Glyph>
    ),
  },
];

function ViewToolbar() {
  return (
    <div
      role="toolbar"
      aria-label="View"
      className="absolute top-[6px] left-[530px] flex h-9 items-center gap-1 border border-[#b4b8ba] bg-[#f8fafc] px-1"
    >
      {VIEW_TOOLS.map((tool) => (
        <ToolButton key={tool.label} label={tool.label} active={tool.active}>
          {tool.icon}
          {tool.corner && <Corner />}
        </ToolButton>
      ))}
    </div>
  );
}

type Stop = [number, string];

function Stops({ list }: { list: Stop[] }) {
  return (
    <>
      {list.map(([offset, color]) => (
        <stop key={offset} offset={offset} stopColor={color} />
      ))}
    </>
  );
}

/* distance from the arc centre, hot end last */
const HOT_LEG: Stop[] = [
  [0.18, "#0028cc"],
  [0.22, "#0058cc"],
  [0.27, "#0088cc"],
  [0.32, "#00a0cc"],
  [0.37, "#00b4cc"],
  [0.41, "#00c8d0"],
  [0.44, "#00cccc"],
  [0.49, "#00c498"],
  [0.525, "#00b850"],
  [0.547, "#08b400"],
  [0.57, "#40b800"],
  [0.605, "#80c000"],
  [0.64, "#acc800"],
  [0.667, "#cccc00"],
  [0.715, "#ccbc00"],
  [0.766, "#cc9c00"],
  [0.83, "#cc8000"],
  [0.885, "#c86000"],
  [0.945, "#c04400"],
  [1, "#b02c00"],
];

const BASE: Stop[] = [
  [0, "#00a8cc"],
  [0.25, "#0094cc"],
  [0.55, "#0078cc"],
  [0.8, "#0058cc"],
  [1, "#0030cc"],
];

const COLD_LEG: Stop[] = [
  [0, "#0090cc"],
  [0.3, "#0080cc"],
  [0.55, "#0068cc"],
  [0.8, "#0048cc"],
  [1, "#0024d4"],
];

const INNER_SIDE: Stop[] = [
  [0, "#5a2000"],
  [0.2, "#5c3400"],
  [0.38, "#5c4600"],
  [0.52, "#505200"],
  [0.6, "#2c5000"],
  [0.65, "#004c0c"],
  [0.73, "#005040"],
  [0.85, "#005858"],
  [0.95, "#006070"],
];

function ThermalModel() {
  const front = "M702 332H814L846 766H1071L1040 335.500 1151 336 1193.500 914 745 909z";

  return (
    <svg
      viewBox="373 183 1545 853"
      className="h-full w-full"
      fill="none"
      role="img"
      aria-label="Deformation of the thermal structure"
    >
      <defs>
        <radialGradient id="hotLeg" gradientUnits="userSpaceOnUse" cx="835" cy="1040" r="714">
          <Stops list={HOT_LEG} />
        </radialGradient>
        <linearGradient id="base" gradientUnits="userSpaceOnUse" x1="0" y1="766" x2="0" y2="912">
          <Stops list={BASE} />
        </linearGradient>
        <linearGradient id="coldLeg" gradientUnits="userSpaceOnUse" x1="1040" y1="336" x2="1151" y2="328">
          <Stops list={COLD_LEG} />
        </linearGradient>
        <linearGradient id="bottomEdge" gradientUnits="userSpaceOnUse" x1="0" y1="790" x2="0" y2="914">
          <stop offset="0" stopColor="#0038d0" stopOpacity="0" />
          <stop offset="0.600" stopColor="#0034d0" stopOpacity="0.350" />
          <stop offset="1" stopColor="#0028d0" stopOpacity="0.850" />
        </linearGradient>
        <linearGradient id="innerSide" gradientUnits="userSpaceOnUse" x1="814" y1="332" x2="1054" y2="632">
          <Stops list={INNER_SIDE} />
        </linearGradient>
        <linearGradient id="floor" gradientUnits="userSpaceOnUse" x1="846" y1="766" x2="1071" y2="740">
          <Stops list={[[0, "#00a0bc"], [0.5, "#0094bc"], [1, "#0080bc"]]} />
        </linearGradient>
        <linearGradient id="hotTop" gradientUnits="userSpaceOnUse" x1="710" y1="0" x2="848" y2="0">
          <Stops list={[[0, "#a80800"], [1, "#a82800"]]} />
        </linearGradient>
        <linearGradient id="coldTop" gradientUnits="userSpaceOnUse" x1="1050" y1="290" x2="1170" y2="325">
          <Stops list={[[0, "#0088bc"], [0.5, "#006cbc"], [1, "#003cc8"]]} />
        </linearGradient>
        <linearGradient id="baseFade" gradientUnits="userSpaceOnUse" x1="790" y1="760" x2="880" y2="850">
          <Stops list={[[0, "#000"], [1, "#fff"]]} />
        </linearGradient>
        <linearGradient id="coldFade" gradientUnits="userSpaceOnUse" x1="960" y1="850" x2="1100" y2="770">
          <Stops list={[[0, "#000"], [1, "#fff"]]} />
        </linearGradient>
        <mask id="baseMask" maskUnits="userSpaceOnUse" x="690" y="270" width="550" height="650">
          <path d="M690 270h550v650H690z" fill="url(#baseFade)" />
        </mask>
        <mask id="coldMask" maskUnits="userSpaceOnUse" x="690" y="270" width="550" height="650">
          <path d="M846 270h394v650H846z" fill="url(#coldFade)" />
        </mask>
      </defs>

      <path d={front} fill="url(#hotLeg)" />
      <path d={front} fill="url(#base)" mask="url(#baseMask)" />
      <path d={front} fill="url(#coldLeg)" mask="url(#coldMask)" />
      <path d={front} fill="url(#bottomEdge)" />
      <path d="M814 332 848 280 880.500 714.500 846 766z" fill="url(#innerSide)" />
      <path d="M846 766 880.500 714.500 1067.500 715.500 1071 768z" fill="url(#floor)" />
      <path d="M702 332 735.500 279 848 280 814 332z" fill="url(#hotTop)" />
      <path d="M1040 335.500 1073 282.500 1185.500 283.500 1151 336z" fill="url(#coldTop)" />
      <path d="M1151 336 1185.500 283.500 1227.500 862 1193.500 914z" fill="#00005c" />
      <path
        d="M702 332 735.500 279 848 280 880.500 714.500 1067.500 715.500M702 332 745 909 1193.500 914 1227.500 862 1185.500 283.500 1073 282.500 1040 335.500 1071 768 846 766 814 332zM848 280 814 332M846 766 880.500 714.500M1040 335.500 1151 336 1185.500 283.500"
        stroke="#06182c"
        strokeOpacity="0.800"
      />
      <path
        d="M1329.500 391v15l3.500-3 2.500 5.500 2-1-2.500-5.500h4.500z"
        fill="#fff"
        stroke="#333"
      />
    </svg>
  );
}

const LEVELS = [
  "0.0201",
  "0.0178",
  "0.0156",
  "0.0134",
  "0.0112",
  "8.9210e-03",
  "6.6908e-03",
  "4.4605e-03",
  "2.2303e-03",
  "0.0000",
];

function Choice({ label, options, className }: { label: string; options: string[]; className: string }) {
  return (
    <div className={`relative h-6 ${className}`}>
      <select
        aria-label={label}
        className="h-full w-full appearance-none border border-[#b4b8ba] bg-[#fafbfc] pl-[11px] text-[11px] text-[#4b5053] outline-none"
      >
        {options.map((option) => (
          <option key={option}>{option}</option>
        ))}
      </select>
      <div className="pointer-events-none absolute inset-y-0 right-[5px] flex items-center">
        <Caret />
      </div>
    </div>
  );
}

function Legend() {
  return (
    <div className="absolute top-0 right-0 w-[144px] border border-[#c4c8ca] bg-[#eceff0] px-[9px] pt-1 pb-[14px]">
      <div className="flex flex-col gap-[5px]">
        <Choice label="Result" options={["Deformation", "Stress", "Temperature"]} className="w-full" />
        <div className="flex justify-between">
          <Choice label="Component" options={["SUM", "X", "Y", "Z"]} className="w-[66px]" />
          <Choice label="Unit" options={["in", "mm"]} className="w-[51px]" />
        </div>
        <Choice label="Location" options={["Surface", "Volume"]} className="w-full" />
      </div>

      <button type="button" aria-label="Collapse legend" className="mt-3 ml-[3px] block">
        <Glyph>
          <path d="M4 2.500h8a2.500 2.500 0 0 1 2.500 2.500v6a2.500 2.500 0 0 1-2.500 2.500H4A2.500 2.500 0 0 1 1.500 11V5A2.500 2.500 0 0 1 4 2.500z" fill="#6c7275" />
          <path d="M4 7.200h8v1.600H4z" fill="#fff" />
        </Glyph>
      </button>

      <div className="mt-[7px] flex gap-[14px]">
        <div className="mt-3 h-[226px] w-[30px] border-y border-[#333] bg-[linear-gradient(#d00c00_0%,#ff7400_14%,#ffb000_26%,#ffec00_38%,#a8e400_50%,#00e8b0_63%,#00f0ff_76%,#00a8ff_90%,#0070f8_100%)]" />
        <ol className="text-[10px] text-[#8b9093]">
          {LEVELS.map((level) => (
            <li key={level} className="flex h-[25px] items-center first:text-[#3f4548] last:text-[#3f4548]">
              {level}
            </li>
          ))}
        </ol>
      </div>

      <div className="mt-[7px] flex h-8 items-center">
        <button type="button" aria-label="Min and max" className="flex w-[38px] pl-2">
          <Glyph>
            <path d="M5 1.500h8l1.500 2v8l-3 3H4L2 12V4.500z" fill="#f4e8a0" stroke="#d8c8b0" />
            <path d="M10 2h3.500l1 2v7l-3 3H10z" fill="#b8e0c8" />
            <path d="M2.500 7 8 14H4l-1.500-2z" fill="#f4b49c" />
            <circle cx="14" cy="2" r="1.700" fill="#d8f0fa" stroke="#3a9cc8" />
            <circle cx="2" cy="14" r="1.700" fill="#d04040" stroke="#902020" />
          </Glyph>
        </button>
        <button
          type="button"
          aria-label="Banded legend"
          className="flex h-8 w-8 items-center justify-center border border-[#a9adaf] bg-[#dcdfe1]"
        >
          <span className="h-5 w-5 bg-[linear-gradient(#f07040,#f8b060_20%,#f4f080_38%,#50c070_55%,#40a8d8_72%,#7060c0)]" />
        </button>
        <button type="button" aria-label="Reverse legend" className="flex w-[44px] justify-center">
          <svg viewBox="0 0 18 14" className="h-[14px] w-[18px]" fill="none" aria-hidden="true">
            <path d="M9.500 1C6 0.500 4.500 4 4.500 7" stroke="#3f4548" strokeWidth="2.500" />
            <path d="M0 6h9l-4.500 5.500z" fill="#3f4548" />
            <path d="M9 13c3.500 0.500 4.500-2.500 4.500-6" stroke="#a0a4a6" strokeWidth="2.500" />
            <path d="M9.500 8H18l-4.500-5.500z" fill="#a0a4a6" />
          </svg>
        </button>
      </div>
    </div>
  );
}

function Triad() {
  return (
    <div className="absolute right-0 bottom-0 border-t border-l border-[#7c8184] bg-white">
      <svg viewBox="0 0 113 122" className="h-[122px] w-[113px]" fill="none" role="img" aria-label="Coordinate axes">
        <path d="M35 24l5 57M40 80h57M40 80 28 99" stroke="#333" />
        <path d="M33 65.500h24l2 23H35zM38.500 57H63l1.500 24H40zM33 65.500l5.500-8.500M57 65.500 63 57M59 88.500l5.500-7.500M35 88.500 40 81" stroke="#333" />
        <g fill="#222" fontSize="12" fontFamily="Liberation Sans, sans-serif">
          <text x="30" y="25">Y</text>
          <text x="96" y="85">X</text>
          <text x="21" y="107">Z</text>
        </g>
      </svg>
    </div>
  );
}

function StatusBar() {
  return (
    <footer className="flex h-[42px] shrink-0 items-center border-t border-[#bfc3c4] bg-[#f9fafa] text-[11px] text-[#54585b]">
      <div className="flex flex-1 items-center gap-1 pt-2 pl-[5px]">
        <ToolButton label="Show navigator" active>
          <Glyph>
            <path d="M1 1h14v14H1z" fill="#fff" stroke="#777" />
            <path d="M1 1h14v3.500H1z" fill="#fff" stroke="#777" />
            <path d="M1 4.500h4.500V15H1z" fill="#a4d4ec" stroke="#4a88a8" />
            <path d="M7 12.500c2.500-3.500 6-3.500 8.500 0-2.500 3-6 3-8.500 0z" fill="#666" />
            <circle cx="11.300" cy="12.500" r="1.200" fill="#fff" />
          </Glyph>
        </ToolButton>
        <ToolButton label="Show browser">
          <Glyph>
            <circle cx="8" cy="8" r="6.500" fill="#3a94c8" />
            <path d="M5 4c3-2 6 0 5 2s-3 1-4 3 1 4 3 4" fill="#8fd0f0" />
            <ellipse cx="8" cy="8" rx="9" ry="3.500" transform="rotate(-45 8 8)" stroke="#6c7c84" />
          </Glyph>
        </ToolButton>
        <ToolButton label="Full screen">
          <Glyph>
            <path d="M0.500 0.500h15v15h-15z" fill="url(#plate)" stroke="#5a98b4" />
          </Glyph>
        </ToolButton>
        <div className="ml-[5px] h-7 border-l border-[#b4b8ba]" />
        <div className="ml-[6px] h-[5px] w-[5px] rounded-full bg-[#1c6a90]" />
        <p>The simulation study "Structure2"&nbsp; is complete.</p>
      </div>

      <div className="flex items-center pt-[6px]">
        <div className="mr-8 h-8 border-l border-[#b4b8ba]" />
        <div className="mr-1 h-8 w-[5px] border-x border-[#c4c8ca]" />
        <button type="button" aria-label="Find" className="flex h-7 w-8 items-center justify-center border border-[#c4c8ca]">
          <Glyph>
            <path d="M4 1h2.500v2.500L8 4.500l1.500-1V1H12v2.500l3 7V15H9.500v-4h-3v4H0.500v-4.500l3-7z" fill="#44494c" />
            <path d="M2.500 10v3.500M11.500 10v3.500" stroke="#b4b8ba" strokeWidth="1.500" />
          </Glyph>
        </button>
        <button type="button" aria-label="Find list" className="flex h-7 w-[18px] items-center justify-center border-y border-r border-[#c4c8ca]">
          <Caret />
        </button>
        <div className="mr-[90px] ml-[2px] h-8 border-l border-[#c4c8ca]" />
        <div className="relative mr-[18px] h-[30px] w-[169px]">
          <select
            aria-label="Selection filter"
            className="h-full w-full appearance-none border border-[#a9adaf] bg-[#fafbfb] pl-[9px] outline-none"
          >
            <option>Geometry</option>
            <option>Features</option>
          </select>
          <div className="pointer-events-none absolute inset-y-px right-px flex w-[19px] items-center justify-center border-l border-[#a9adaf]">
            <Caret />
          </div>
        </div>
      </div>
    </footer>
  );
}

export default function App() {
  return (
    <div className="flex h-screen flex-col overflow-hidden border-r border-black bg-white font-['Open_Sans','Noto_Sans',sans-serif]">
      <Gradients />
      <TitleBar />
      <TabBar />
      <Ribbon />
      <div className="flex min-h-0 flex-1">
        <Sidebar />
        <main className="relative min-w-0 flex-1 bg-[#fefefe]">
          <ThermalModel />
          <ViewToolbar />
          <Legend />
          <Triad />
        </main>
      </div>
      <StatusBar />
      <div className="h-[2px] shrink-0 bg-[#46494c]" />
    </div>
  );
}
